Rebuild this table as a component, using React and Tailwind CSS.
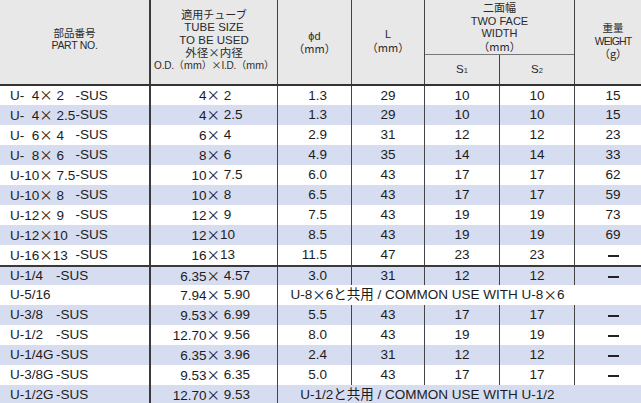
import React from "react";

const X = () => <span className="font-['Noto_Sans_CJK_JP',sans-serif]">×</span>;

function T({ s }) {
  const parts = s.split("×");
  const out = [];
  parts.forEach((p, i) => {
    if (i > 0) out.push(<X key={"x" + i} />);
    out.push(<React.Fragment key={"t" + i}>{p}</React.Fragment>);
  });
  return <>{out}</>;
}

const rows = [
  ["U-\u20074× 2", "-SUS", "4×", " 2", "1.3", "29", "10", "10", "15"],
  ["U-\u20074× 2.5", "-SUS", "4×", " 2.5", "1.3", "29", "10", "10", "15"],
  ["U-\u20076× 4", "-SUS", "6×", " 4", "2.9", "31", "12", "12", "23"],
  ["U-\u20078× 6", "-SUS", "8×", " 6", "4.9", "35", "14", "14", "33"],
  ["U-10× 7.5", "-SUS", "10×", " 7.5", "6.0", "43", "17", "17", "62"],
  ["U-10× 8", "-SUS", "10×", " 8", "6.5", "43", "17", "17", "59"],
  ["U-12× 9", "-SUS", "12×", " 9", "7.5", "43", "19", "19", "73"],
  ["U-12×10", "-SUS", "12×", "10", "8.5", "43", "19", "19", "69"],
  ["U-16×13", "-SUS", "16×", "13", "11.5", "47", "23", "23", "-"],
  ["U-1/4", "-SUS", "6.35×", " 4.57", "3.0", "31", "12", "12", "-"],
  ["U-5/16", "", "7.94×", " 5.90", "U-8×6と共用 / COMMON USE WITH U-8×6"],
  ["U-3/8", "-SUS", "9.53×", " 6.99", "5.5", "43", "17", "17", "-"],
  ["U-1/2", "-SUS", "12.70×", " 9.56", "8.0", "43", "19", "19", "-"],
  ["U-1/4G", "-SUS", "6.35×", " 3.96", "2.4", "31", "12", "12", "-"],
  ["U-3/8G", "-SUS", "9.53×", " 6.35", "5.0", "43", "17", "17", "-"],
  ["U-1/2G", "-SUS", "12.70×", " 9.53", "U-1/2と共用 / COMMON USE WITH U-1/2"],
];

const Dash = () => <span className="inline-block w-[11px] h-[2px] bg-[#222] mt-[2px]" />;

function Row({ r, i }) {
  const blue = i % 2 === 1;
  const bg = blue ? "bg-[#d7ddf1]" : "bg-white";
  const h = i === 0 ? "h-[19px]" : "h-[20px]";
  const sep = i === 9 ? "border-t-2 border-[#3a3a3a]" : "";
  const merged = r.length === 5;
  return (
    <div className={`flex ${h} ${bg} ${sep}`}>
      <div className="w-[151px] shrink-0 border-r-2 border-[#3a3a3a] flex items-center pl-[10px] whitespace-pre">
        <span className={i < 9 ? "inline-block min-w-[65.5px]" : "inline-block min-w-[46px]"}>
          <T s={r[0]} />
        </span>
        <span>{r[1]}</span>
      </div>
      <div className="w-[127px] shrink-0 border-r border-[#444] flex items-center whitespace-pre">
        <span className="inline-block w-[69px] text-right">
          <T s={r[2]} />
        </span>
        <span>{r[3]}</span>
      </div>
      {merged ? (
        <div className="w-[299px] shrink-0 flex items-center justify-center whitespace-pre">
          <T s={r[4]} />
        </div>
      ) : (
        <>
          <div className="w-[74px] shrink-0 border-r border-[#444] flex items-center justify-end pr-[24px]">{r[4]}</div>
          <div className="w-[73px] shrink-0 border-r border-[#444] flex items-center justify-center">{r[5]}</div>
          <div className="w-[75px] shrink-0 border-r border-[#444] flex items-center justify-center">{r[6]}</div>
          <div className="w-[75px] shrink-0 border-r border-[#444] flex items-center justify-center">{r[7]}</div>
          <div className="w-[76px] shrink-0 flex items-center justify-center">{r[8] === "-" ? <Dash /> : r[8]}</div>
        </>
      )}
    </div>
  );
}

export default function App() {
  return (
    <div className="w-[641px] h-[403px] overflow-hidden bg-white text-[#1c1c1c] font-['Liberation_Sans','Noto_Sans_CJK_JP',sans-serif]">
      <div className="w-[650px]">
        {/* Header */}
        <div className="flex h-[86px] bg-[#e8e8e8] border-b-2 border-[#333] text-[#2a2a2a]">
          <div className="w-[151px] shrink-0 border-r-2 border-[#3a3a3a] flex flex-col items-center justify-center pb-[7px] leading-[12px]">
            <div className="text-[10.5px] font-['Noto_Sans_CJK_JP',sans-serif]">部品番号</div>
            <div className="text-[10.5px] tracking-[-0.3px]">PART NO.</div>
          </div>
          <div className="w-[127px] shrink-0 border-r border-[#444] flex flex-col items-center justify-center pb-[4px] leading-[12.5px]">
            <div className="text-[11px] font-['Noto_Sans_CJK_JP',sans-serif] mb-[1px]">適用チューブ</div>
            <div className="text-[11.5px]">TUBE SIZE</div>
            <div className="text-[11.5px]">TO BE USED</div>
            <div className="text-[11.5px] font-['Noto_Sans_CJK_JP',sans-serif]">外径×内径</div>
            <div className="text-[10px] whitespace-nowrap tracking-[-0.2px]">
              O.D.<span className="font-['Noto_Sans_CJK_JP',sans-serif]">（mm）×</span>I.D.<span className="font-['Noto_Sans_CJK_JP',sans-serif]">（mm）</span>
            </div>
          </div>
          <div className="w-[74px] shrink-0 border-r border-[#444] flex flex-col items-center justify-center leading-[12px] text-[11px]">
            <div>ϕd</div>
            <div className="font-['Noto_Sans_CJK_JP',sans-serif]">（mm）</div>
          </div>
          <div className="w-[73px] shrink-0 border-r border-[#444] flex flex-col items-center justify-center pb-[3px] leading-[12.5px] text-[11px]">
            <div>L</div>
            <div className="font-['Noto_Sans_CJK_JP',sans-serif]">（mm）</div>
          </div>
          <div className="w-[150px] shrink-0 border-r border-[#444] flex flex-col">
            <div className="h-[55px] border-b border-[#777] flex flex-col items-center justify-center pb-[1px] leading-[12.5px] text-[11px]">
              <div className="font-['Noto_Sans_CJK_JP',sans-serif] mb-[1px]">二面幅</div>
              <div>TWO FACE</div>
              <div>WIDTH</div>
              <div className="font-['Noto_Sans_CJK_JP',sans-serif]">（mm）</div>
            </div>
            <div className="flex-1 flex text-[11.5px]">
              <div className="w-[75px] border-r border-[#444] flex items-center justify-center">
                S<span className="text-[7.5px] mt-[3px]">1</span>
              </div>
              <div className="flex-1 flex items-center justify-center">
                S<span className="text-[7.5px] mt-[3px]">2</span>
              </div>
            </div>
          </div>
          <div className="w-[76px] shrink-0 flex flex-col items-center justify-center pb-[2px] leading-[12.5px]">
            <div className="text-[10.5px] font-['Noto_Sans_CJK_JP',sans-serif]">重量</div>
            <div className="text-[10.5px] tracking-[-0.9px]">WEIGHT</div>
            <div className="text-[11px] font-['Noto_Sans_CJK_JP',sans-serif]">（g）</div>
          </div>
        </div>
        {/* Body */}
        <div className="text-[13.5px] leading-none">
          {rows.map((r, i) => (
            <Row key={i} r={r} i={i} />
          ))}
        </div>
      </div>
    </div>
  );
}
